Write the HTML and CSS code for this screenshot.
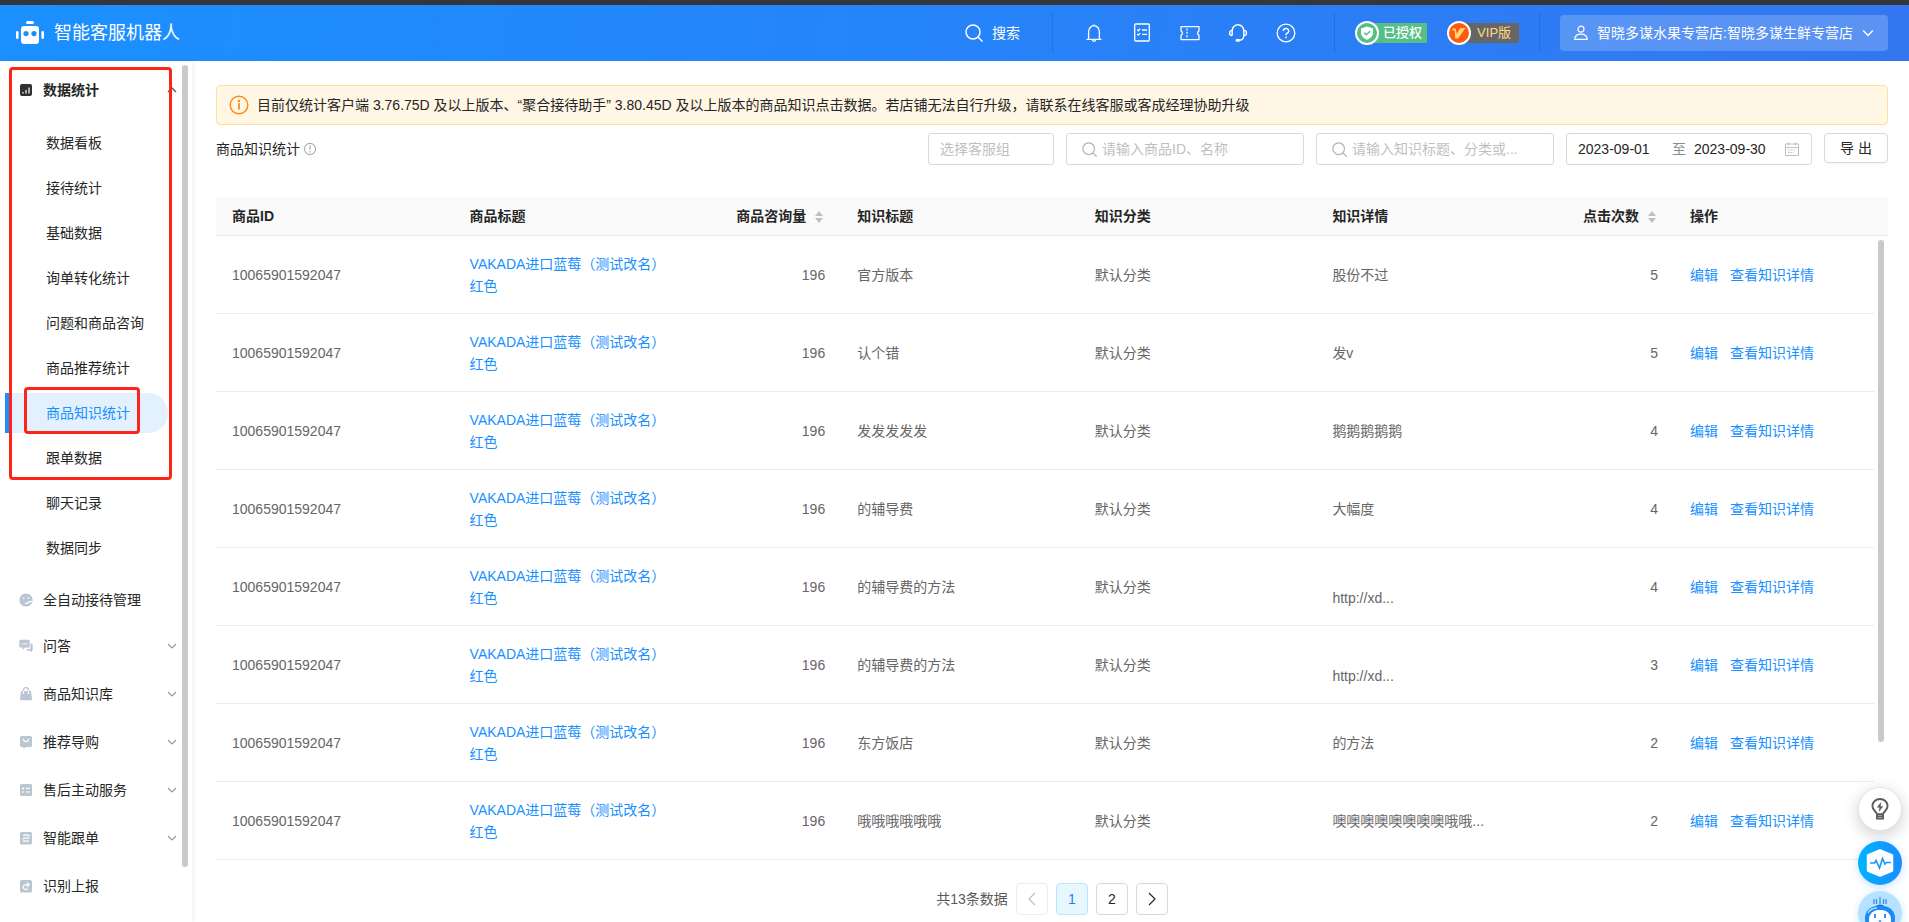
FILE: index.html
```html
<!DOCTYPE html>
<html lang="zh-CN">
<head>
<meta charset="utf-8">
<title>智能客服机器人</title>
<link rel="stylesheet" href="styles.css">
</head>
<body>
<svg class="defs" aria-hidden="true">
  <symbol id="down" viewBox="0 0 10 10"><path d="M1 3l4 4 4-4" fill="none" stroke="currentColor" stroke-width="1.2"/></symbol>
  <symbol id="up" viewBox="0 0 10 10"><path d="M1 7l4-4 4 4" fill="none" stroke="currentColor" stroke-width="1.4"/></symbol>
  <symbol id="search" viewBox="0 0 18 18"><g fill="none" stroke="currentColor" stroke-width="1.5"><circle cx="8" cy="8" r="7"/><path d="M13 13l4.5 4.5"/></g></symbol>
  <symbol id="sort" viewBox="0 0 8 14"><path d="M4 1l4 5H0zM4 13l4-5H0z" fill="currentColor"/></symbol>
</svg>
<header class="topbar">
  <a class="brand" href="#">
    <svg width="28" height="24" viewBox="0 0 28 24"><g fill="#fff"><rect x="10" y="0" width="8" height="3" rx="1.5"/><rect x="5" y="5" width="18" height="18" rx="3"/><rect x="0" y="10" width="2.6" height="8" rx="1.3"/><rect x="25.4" y="10" width="2.6" height="8" rx="1.3"/></g><g fill="#1b8eff"><circle cx="10" cy="12.6" r="2.6"/><circle cx="18" cy="12.6" r="2.6"/></g></svg>
    <span>智能客服机器人</span>
  </a>
  <button class="top-search"><svg width="18" height="18"><use href="#search"/></svg>搜索</button>
  <nav class="top-icons" aria-label="工具">
    <button aria-label="通知"><svg width="20" height="20" viewBox="0 0 20 20"><g fill="none" stroke="#fff" stroke-width="1.3"><path d="M4.6 16.2V9a5.4 6.4 0 0 1 10.8 0v7.2M2.5 16.4h15M8.3 16.6a1.7 1.7 0 0 0 3.4 0M10 2.6V1.4"/></g></svg></button>
    <button aria-label="任务"><svg width="20" height="20" viewBox="0 0 20 20"><g fill="none" stroke="#fff" stroke-width="1.3"><rect x="2.7" y="1" width="14.6" height="17" rx="1"/><path d="M5.2 6.6l1.1 1.1 1.9-2M5.2 11l1.1 1.1 1.9-2M10 7h5M10 11.3h5"/></g></svg></button>
    <button aria-label="卡券"><svg width="20" height="20" viewBox="0 0 20 20"><g fill="none" stroke="#fff" stroke-width="1.3"><path d="M1 3.6h18v4.2a2.6 2.6 0 0 0 0 4.6v4.2H1v-4.2a2.6 2.6 0 0 0 0-4.6z" stroke-linejoin="round"/><path d="M7 5.4v9.6" stroke-dasharray="2 1.4"/></g></svg></button>
    <button aria-label="客服"><svg width="20" height="20" viewBox="0 0 20 20"><g fill="none" stroke="#fff" stroke-width="1.4"><path d="M4.2 12.4V7.6a5.8 5.8 0 0 1 11.6 0v4.8c0 3-2 4.6-4.4 5"/><path d="M4.2 7.4C.7 7.4.7 12.6 4.2 12.6M15.8 7.4c3.5 0 3.5 5.2 0 5.2"/></g><rect x="7.6" y="16" width="4.6" height="2.8" rx="1.4" fill="#fff"/></svg></button>
    <button aria-label="帮助"><svg width="20" height="20" viewBox="0 0 20 20"><circle cx="10" cy="10" r="8.8" fill="none" stroke="#fff" stroke-width="1.3"/><path d="M7.3 8a2.7 2.5 0 1 1 3.9 2.2c-.9.5-1.2.9-1.2 2" fill="none" stroke="#fff" stroke-width="1.4"/><circle cx="10" cy="14.3" r=".9" fill="#fff"/></svg></button>
  </nav>
  <div class="badges">
    <span class="tag tag-auth"><svg width="24" height="24" viewBox="0 0 24 24"><circle cx="12" cy="12" r="11" fill="#55bf85" stroke="#fff" stroke-width="2"/><path d="M12 5.4l6 2v4.4c0 3.4-2.6 5.6-6 7-3.4-1.4-6-3.6-6-7V7.400z" fill="#fff"/><path d="M9.200 11.600l2.200 2.200 3.600-3.600" fill="none" stroke="#55bf85" stroke-width="1.5"/></svg>已授权</span>
    <span class="tag tag-vip"><svg width="24" height="24" viewBox="0 0 24 24"><circle cx="12" cy="12" r="11" fill="#ff5a14" stroke="#fff" stroke-width="2"/><path d="M5.500 7.500h3.200l1 5.500 3.600-6h5.200l-7.500 10.500H8.200l-.5-8H5.500z" fill="#ffd873"/></svg>VIP版</span>
  </div>
  <button class="account">
    <svg width="14" height="16" viewBox="0 0 14 16"><g fill="none" stroke="#fff" stroke-width="1.200"><circle cx="7" cy="4.200" r="3"/><path d="M.8 14.400c0-3.600 2.400-5.200 6.200-5.200s6.200 1.600 6.200 5.200z"/></g></svg>
    <span>智晓多谋水果专营店:智晓多谋生鲜专营店</span>
    <svg width="12" height="12"><use href="#down"/></svg>
  </button>
</header>

<div class="page">
  <aside class="sidebar">
    <nav class="menu" aria-label="主菜单">
      <a class="group group-open" href="#"><svg width="14" height="14" viewBox="0 0 14 14"><rect x="1" y="1" width="12" height="12" rx="2" fill="#303133"/><path d="M4 10.500V9M7 10.500V7M10 10.500V4.500" stroke="#fff" stroke-width="1.200"/></svg><span>数据统计</span><svg class="caret" width="10" height="10"><use href="#up"/></svg></a>
      <ul class="submenu">
        <li><a href="#">数据看板</a></li>
        <li><a href="#">接待统计</a></li>
        <li><a href="#">基础数据</a></li>
        <li><a href="#">询单转化统计</a></li>
        <li><a href="#">问题和商品咨询</a></li>
        <li><a href="#">商品推荐统计</a></li>
        <li><a class="active" href="#" aria-current="page">商品知识统计</a></li>
        <li><a href="#">跟单数据</a></li>
        <li><a href="#">聊天记录</a></li>
        <li><a href="#">数据同步</a></li>
      </ul>
      <a class="group group-flat" href="#"><svg width="14" height="14" viewBox="0 0 14 14"><circle cx="7" cy="7" r="6.600" fill="#bcc5d2"/><g fill="none" stroke="#fff" stroke-width="1.200"><path d="M3.600 5.200h1.800M8.600 5.200h1.800M6 10.200c2 .8 3.400-.6 4-1.600h3"/></g></svg><span>全自动接待管理</span></a>
      <a class="group" href="#"><svg width="14" height="14" viewBox="0 0 14 14"><path d="M1.500.8h8a1.200 1.200 0 0 1 1.200 1.200v5.400a1.200 1.200 0 0 1-1.200 1.200H6L3.500 11V8.600h-2A1.200 1.200 0 0 1 .3 7.400V2A1.200 1.200 0 0 1 1.500.8zM11.500 4.500h1a1.200 1.200 0 0 1 1.200 1.200v4.800l-.7.900v1.800l-2.300-1.700H7.500V10h3a1 1 0 0 0 1-1z" fill="#bcc5d2"/><path d="M2.800 4.800h5.400" stroke="#fff" stroke-width="1.300" stroke-dasharray="1.300 .75"/></svg><span>问答</span><svg class="caret" width="10" height="10"><use href="#down"/></svg></a>
      <a class="group" href="#"><svg width="14" height="14" viewBox="0 0 14 14"><path d="M4.500 5.500V3.200a2.500 2.500 0 0 1 5 0v2.300" fill="none" stroke="#bcc5d2" stroke-width="1.200"/><path d="M2 4h10l1 8a1 1 0 0 1-1 1.200H2A1 1 0 0 1 1 12z" fill="#bcc5d2"/><path d="M4.500 4v3M9.500 4v3" stroke="#fff" stroke-width="1.100"/></svg><span>商品知识库</span><svg class="caret" width="10" height="10"><use href="#down"/></svg></a>
      <a class="group" href="#"><svg width="14" height="14" viewBox="0 0 14 14"><path d="M2.500 1h9A1.500 1.500 0 0 1 13 2.500v8a1.500 1.500 0 0 1-1.500 1.500H7l-2.500 1.500L4 12H2.500A1.500 1.500 0 0 1 1 10.500v-8A1.500 1.500 0 0 1 2.500 1z" fill="#bcc5d2"/><path d="M4.300 3.800c.4 3.800 5 3.800 5.400 0" fill="none" stroke="#fff" stroke-width="1.300"/></svg><span>推荐导购</span><svg class="caret" width="10" height="10"><use href="#down"/></svg></a>
      <a class="group" href="#"><svg width="14" height="14" viewBox="0 0 14 14"><rect x="1" y="1" width="12" height="12" rx="1.500" fill="#bcc5d2"/><path d="M3 5.200l.8.8 1.300-1.500M3 9h2M7 5.300h4M7 9h4" fill="none" stroke="#fff" stroke-width="1.200"/></svg><span>售后主动服务</span><svg class="caret" width="10" height="10"><use href="#down"/></svg></a>
      <a class="group" href="#"><svg width="14" height="14" viewBox="0 0 14 14"><rect x="1" y="1" width="12" height="12.500" rx="1.500" fill="#bcc5d2"/><path d="M4 4.200h5a1.200 1.200 0 0 1 0 3H5.200a1.300 1.300 0 0 0 0 3H10" fill="none" stroke="#fff" stroke-width="1.200" stroke-dasharray="7 1"/></svg><span>智能跟单</span><svg class="caret" width="10" height="10"><use href="#down"/></svg></a>
      <a class="group" href="#"><svg width="14" height="14" viewBox="0 0 14 14"><rect x="1" y="1" width="12" height="12.500" rx="1.500" fill="#bcc5d2"/><path d="M9 10.300H6.300a2.200 2.200 0 0 1 0-4.500h3.500M8 3.700l2.200 2.100L8 7.900" fill="none" stroke="#fff" stroke-width="1.200"/></svg><span>识别上报</span></a>
    </nav>
    <div class="side-thumb"></div>
    <div class="mark mark-outer"></div>
    <div class="mark mark-inner"></div>
  </aside>

  <main class="content">
    <div class="notice">
      <svg width="20" height="20" viewBox="0 0 20 20"><circle cx="10" cy="10" r="8.800" fill="none" stroke="#fa8c16" stroke-width="1.400"/><path d="M10 8.300v6.200" stroke="#fa8c16" stroke-width="1.800"/><circle cx="10" cy="5.900" r="1.200" fill="#fa8c16"/></svg>
      <span>目前仅统计客户端 3.76.75D 及以上版本、“聚合接待助手” 3.80.45D 及以上版本的商品知识点击数据。若店铺无法自行升级，请联系在线客服或客成经理协助升级</span>
    </div>
    <div class="toolbar">
      <h1>商品知识统计<svg width="14" height="14" viewBox="0 0 14 14"><g fill="none" stroke="#a6b0b0"><circle cx="7" cy="7" r="5.600" stroke-width="1.100"/><path d="M7 3.600v4.200M7 9v1.400" stroke-width="1.300"/></g></svg></h1>
      <select class="box group-select" aria-label="客服组"><option>选择客服组</option></select>
      <label class="box search-box"><svg width="15" height="15"><use href="#search"/></svg><input type="text" aria-label="商品ID、名称" placeholder="请输入商品ID、名称"></label>
      <label class="box search-box"><svg width="15" height="15"><use href="#search"/></svg><input type="text" aria-label="知识标题、分类" placeholder="请输入知识标题、分类或..."></label>
      <div class="box range">
        <input type="text" aria-label="开始日期" value="2023-09-01">
        <span>至</span>
        <input type="text" aria-label="结束日期" value="2023-09-30">
        <svg width="14" height="14" viewBox="0 0 14 14"><g fill="none" stroke="#bfbfbf"><path d="M.5 2h13v11.500H.5zM.5 5.500h13M3.500.2v3.300M10.500.2v3.300"/><path d="M3 8h8.500M3 10.500h6" stroke-dasharray="1.500 1.200"/></g></svg>
      </div>
      <button class="export">导 出</button>
    </div>

    <div class="table-wrap">
      <table>
        <colgroup><col><col><col class="w-count"><col><col><col><col class="w-click"><col class="w-act"><col class="w-bar"></colgroup>
        <thead><tr><th>商品ID</th><th>商品标题</th><th class="num">商品咨询量<svg width="8" height="14"><use href="#sort"/></svg></th><th>知识标题</th><th>知识分类</th><th>知识详情</th><th class="num">点击次数<svg width="8" height="14"><use href="#sort"/></svg></th><th>操作</th><th class="bar"></th></tr></thead>
        <tbody>
          <tr><td>10065901592047</td><td><a href="#">VAKADA进口蓝莓（测试改名）红色</a></td><td class="num">196</td><td>官方版本</td><td>默认分类</td><td>股份不过</td><td class="num">5</td><td class="acts"><a href="#">编辑</a><a href="#">查看知识详情</a></td><td class="bar"></td></tr>
          <tr><td>10065901592047</td><td><a href="#">VAKADA进口蓝莓（测试改名）红色</a></td><td class="num">196</td><td>认个错</td><td>默认分类</td><td>发v</td><td class="num">5</td><td class="acts"><a href="#">编辑</a><a href="#">查看知识详情</a></td><td class="bar"></td></tr>
          <tr><td>10065901592047</td><td><a href="#">VAKADA进口蓝莓（测试改名）红色</a></td><td class="num">196</td><td>发发发发发</td><td>默认分类</td><td>鹅鹅鹅鹅鹅</td><td class="num">4</td><td class="acts"><a href="#">编辑</a><a href="#">查看知识详情</a></td><td class="bar"></td></tr>
          <tr><td>10065901592047</td><td><a href="#">VAKADA进口蓝莓（测试改名）红色</a></td><td class="num">196</td><td>的辅导费</td><td>默认分类</td><td>大幅度</td><td class="num">4</td><td class="acts"><a href="#">编辑</a><a href="#">查看知识详情</a></td><td class="bar"></td></tr>
          <tr><td>10065901592047</td><td><a href="#">VAKADA进口蓝莓（测试改名）红色</a></td><td class="num">196</td><td>的辅导费的方法</td><td>默认分类</td><td><br>http://xd...</td><td class="num">4</td><td class="acts"><a href="#">编辑</a><a href="#">查看知识详情</a></td><td class="bar"></td></tr>
          <tr><td>10065901592047</td><td><a href="#">VAKADA进口蓝莓（测试改名）红色</a></td><td class="num">196</td><td>的辅导费的方法</td><td>默认分类</td><td><br>http://xd...</td><td class="num">3</td><td class="acts"><a href="#">编辑</a><a href="#">查看知识详情</a></td><td class="bar"></td></tr>
          <tr><td>10065901592047</td><td><a href="#">VAKADA进口蓝莓（测试改名）红色</a></td><td class="num">196</td><td>东方饭店</td><td>默认分类</td><td>的方法</td><td class="num">2</td><td class="acts"><a href="#">编辑</a><a href="#">查看知识详情</a></td><td class="bar"></td></tr>
          <tr><td>10065901592047</td><td><a href="#">VAKADA进口蓝莓（测试改名）红色</a></td><td class="num">196</td><td>哦哦哦哦哦哦</td><td>默认分类</td><td>噢噢噢噢噢噢噢噢哦哦...</td><td class="num">2</td><td class="acts"><a href="#">编辑</a><a href="#">查看知识详情</a></td><td class="bar"></td></tr>
        </tbody>
      </table>
      <div class="table-thumb"></div>
    </div>

    <nav class="pager" aria-label="分页">
      <span>共13条数据</span>
      <button disabled aria-label="上一页"><svg width="16" height="16" viewBox="0 0 16 16"><path d="M11 2L5 8l6 6" fill="none" stroke="currentColor" stroke-width="1.200"/></svg></button>
      <button class="current" aria-current="page">1</button>
      <button>2</button>
      <button aria-label="下一页"><svg width="16" height="16" viewBox="0 0 16 16"><path d="M5 2l6 6-6 6" fill="none" stroke="currentColor" stroke-width="1.200"/></svg></button>
    </nav>
  </main>
</div>

<div class="floats">
  <button class="float-tip" aria-label="建议"><svg width="18" height="22" viewBox="0 0 18 22"><g fill="none" stroke="#5c5c5c" stroke-width="1.900"><path d="M6 16.200c0-2-4.600-3.600-4.600-8.200a7.600 7 0 0 1 15.200 0c0 4.600-4.600 6.200-4.600 8.200z" stroke-linejoin="round"/><path d="M6 16v4.600h6V16M6 18.400h6"/></g><path d="M10 4l-4.200 5.600h2.600L7.800 14l4.400-5.800H9.600z" fill="#5c5c5c"/></svg></button>
  <button class="float-health" aria-label="诊断"><svg width="28" height="28" viewBox="0 0 28 28"><path d="M14 1.500L26 6.500v15l-12 5-12-5v-15z" fill="#fff" stroke="#fff" stroke-width="2.500" stroke-linejoin="round"/><path d="M4 14h4.500l1.500-2.500 3.500 7.500 3-9.500 2.500 5.500 1.500-1.500H25" fill="none" stroke="#1b97ff" stroke-width="1.700"/></svg></button>
  <button class="float-bot" aria-label="机器人"><svg width="44" height="44" viewBox="0 0 44 44"><path d="M22 6v9M18.500 8v5M25.500 8v5M16 8v5M28 8v5" stroke="#3485dc" stroke-width="1.200"/><path d="M19 14h6l3 4H16z" fill="#1473d6"/><rect x="7" y="15" width="30" height="26" rx="12" fill="#1e88f5"/><rect x="11" y="19" width="22" height="20" rx="9" fill="#fff"/><path d="M17 23v4M27 23v4" stroke="#1e88f5" stroke-width="1.800"/><path d="M20 29.500l2 2 2-2" fill="#1e88f5"/><path d="M10 22c2-4 5-5 9-5" fill="none" stroke="#a9dcff" stroke-width="1.500"/></svg></button>
</div>
</body>
</html>
```
FILE: styles.css
```css
* { box-sizing: border-box; }

body {
  margin: 0;
  height: 100vh;
  overflow: hidden;
  display: flex;
  flex-direction: column;
  background: #fff;
  color: #262626;
  font: 14px/22px "Liberation Sans", "Noto Sans CJK SC", sans-serif;
}

button, input, select { font: inherit; color: inherit; }
button { cursor: pointer; }
a { color: #1890ff; text-decoration: none; }
svg { flex: none; display: block; }
.defs { position: absolute; width: 0; height: 0; }

/* Top bar */
.topbar {
  flex: none;
  height: 61px;
  border-top: 5px solid #35363a;
  padding: 0 21px 0 16px;
  display: flex;
  align-items: center;
  background: linear-gradient(100deg, #1b90ff, #2683f9 50%, #3377f0);
  color: #fff;
}
.brand {
  display: flex;
  align-items: center;
  gap: 10px;
  margin-right: auto;
  color: #fff;
  font-size: 18px;
}
.top-search, .top-icons button {
  border: 0;
  padding: 0;
  background: none;
}
.top-search {
  display: flex;
  align-items: center;
  gap: 9px;
  padding-right: 32px;
}
.top-icons {
  display: flex;
  gap: 28px;
  padding: 10px 38px 10px 31px;
  border: solid rgba(0, 50, 140, .18);
  border-width: 0 1px;
}
.badges {
  display: flex;
  gap: 20px;
  padding: 8px 20px;
  border-right: 1px solid rgba(0, 50, 140, .18);
}
.tag {
  display: flex;
  align-items: center;
  gap: 4px;
  width: 72px;
  height: 24px;
  border-radius: 12px 4px 4px 12px;
  font-size: 13px;
  line-height: 20px;
  white-space: nowrap;
  background: linear-gradient(#55bf85, #55bf85) 8px 2px / 100% 20px no-repeat;
}
.tag-auth { font-weight: 500; }
.tag-vip {
  gap: 6px;
  color: #ffd980;
  background-image: linear-gradient(#666, #666);
}
.account {
  display: flex;
  align-items: center;
  gap: 9px;
  height: 36px;
  margin-left: 20px;
  padding: 0 14px;
  border: 0;
  border-radius: 4px;
  background: rgba(255, 255, 255, .2);
}

/* Sidebar */
.page { flex: 1; display: flex; min-height: 0; }
.sidebar {
  position: relative;
  flex: none;
  width: 192px;
  padding-top: 5px;
  box-shadow: 2px 0 4px rgba(0, 0, 0, .06);
}
.group {
  display: flex;
  align-items: center;
  gap: 10px;
  height: 48px;
  padding: 0 15px 0 19px;
  color: #262626;
}
.group-open { font-weight: bold; }
.group-flat { height: 44px; }
.caret { margin-left: auto; color: #999; }
.group-open .caret { color: #555; }
.submenu {
  margin: 0;
  padding: 6px 24px 8px 5px;
  list-style: none;
}
.submenu li { padding: 3px 0 2px; }
.submenu a {
  display: block;
  height: 40px;
  padding-left: 37px;
  border-left: 4px solid transparent;
  color: #262626;
  line-height: 40px;
}
.submenu .active {
  border-left-color: #1890ff;
  border-radius: 0 20px 20px 0;
  background: #e3f0fe;
  color: #1890ff;
}
.side-thumb {
  position: absolute;
  top: 4px;
  right: 4px;
  bottom: 55px;
  width: 6px;
  border-radius: 3px;
  background: #c9c9c9;
}
.mark {
  position: absolute;
  border: 3px solid #fd2419;
  border-radius: 4px;
}
.mark-outer { left: 9px; top: 6px; width: 163px; height: 413px; }
.mark-inner { left: 24px; top: 326px; width: 116px; height: 47px; }

/* Content */
.content {
  flex: 1;
  min-width: 0;
  padding: 24px 21px 0 24px;
}
.notice {
  display: flex;
  align-items: center;
  gap: 8px;
  height: 40px;
  padding: 0 12px;
  border: 1px solid #ffdf9e;
  border-radius: 4px;
  background: #fff6e4;
  white-space: nowrap;
}
.toolbar {
  display: flex;
  gap: 12px;
  padding: 8px 0 32px;
}
.toolbar h1 {
  display: flex;
  align-items: center;
  gap: 3px;
  height: 32px;
  margin: 0 auto 0 0;
  font-size: 14px;
  font-weight: normal;
}
.box {
  height: 32px;
  border: 1px solid #d9d9d9;
  border-radius: 3px;
  background: #fff;
}
.box input {
  min-width: 0;
  padding: 0;
  border: 0;
  outline: 0;
  background: none;
}
.box input::placeholder { color: #bfbfbf; opacity: 1; }
.group-select {
  width: 126px;
  padding: 0 11px;
  appearance: none;
  color: #bfbfbf;
}
.search-box {
  display: flex;
  align-items: center;
  gap: 5px;
  width: 238px;
  padding: 0 15px;
  color: #b5b5b5;
}
.search-box input { flex: 1; }
.range {
  display: flex;
  align-items: center;
  width: 246px;
  padding: 0 12px 0 11px;
}
.range input { width: 91px; }
.range span { padding: 0 8px 0 3px; color: #8c8c8c; }
.range input:first-child { flex: 1; }
.export {
  width: 64px;
  height: 30px;
  padding: 0;
  border: 1px solid #d9d9d9;
  border-radius: 4px;
  background: #fff;
  box-shadow: 0 2px 0 rgba(0, 0, 0, .02);
}

/* Table */
.table-wrap { position: relative; }
table {
  width: 100%;
  table-layout: fixed;
  border-collapse: separate;
  border-spacing: 0;
}
.w-count { width: 150px; }
.w-click { width: 120px; }
.w-act { width: 200px; }
.w-bar { width: 14px; }
th {
  height: 39px;
  padding: 0 16px;
  border-bottom: 1px solid #ebebeb;
  background: #fafafa;
  text-align: left;
  white-space: nowrap;
}
th svg { display: inline-block; margin: 0 2px 0 9px; vertical-align: -3px; color: #bfbfbf; }
th:first-child { border-radius: 4px 0 0; }
th.bar { border-radius: 0 4px 0 0; }
td {
  height: 78px;
  padding: 0 16px;
  border-bottom: 1px solid #ebebeb;
  color: #666;
}
.num { text-align: right; }
.bar { padding: 0; }
td.bar { border: 0; }
.acts a { margin-right: 12px; }
.table-thumb {
  position: absolute;
  top: 43px;
  right: 4px;
  bottom: 118px;
  width: 6px;
  border-radius: 3px;
  background: #c9c9c9;
}

/* Pagination */
.pager {
  display: flex;
  justify-content: center;
  align-items: center;
  gap: 8px;
  padding-top: 23px;
  color: #595959;
}
.pager button {
  display: flex;
  justify-content: center;
  align-items: center;
  width: 32px;
  height: 32px;
  padding: 0;
  border: 1px solid #d9d9d9;
  border-radius: 4px;
  background: #fff;
  color: #262626;
}
.pager button:disabled { border-color: #ececec; color: #bfbfbf; }
.pager .current {
  border-color: #bae7ff;
  background: #e6f7ff;
  color: #2a7dfa;
}

/* Floating shortcuts */
.floats {
  position: fixed;
  right: 7px;
  bottom: -13px;
}
.floats button {
  display: flex;
  justify-content: center;
  align-items: center;
  width: 44px;
  height: 44px;
  padding: 0;
  border: 0;
  border-radius: 50%;
}
.floats .float-tip {
  margin-bottom: 10px;
  border: 1px solid #e4e4e4;
  background: #fff;
  box-shadow: 0 4px 16px rgba(0, 0, 0, .2);
}
.floats .float-health {
  margin-bottom: 6px;
  background: linear-gradient(90deg, #00b4ff, #1b8cff);
  box-shadow: 0 2px 8px rgba(24, 144, 255, .25);
}
.floats .float-bot {
  background: #b5e3ff;
  box-shadow: 0 2px 8px rgba(24, 144, 255, .2);
}
```
